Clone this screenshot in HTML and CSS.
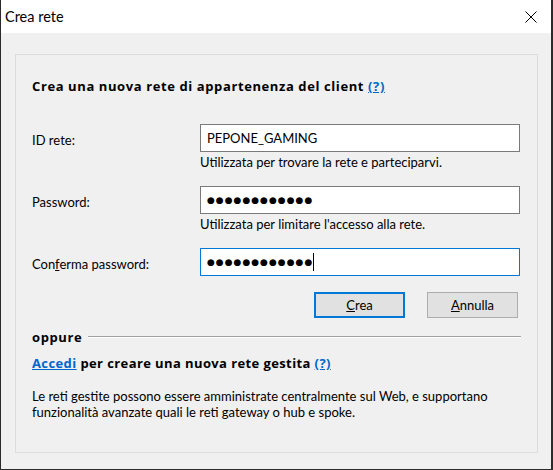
FILE: index.html
```html
<!DOCTYPE html>
<html lang="it">
<head>
<meta charset="utf-8">
<title>Crea rete</title>
<link rel="stylesheet" href="styles.css">
</head>
<body>
<div class="window">
  <div class="titlebar">
    <span class="title">Crea rete</span>
    <svg class="close" width="12" height="12" viewBox="0 0 12 12"><path d="M0.5 0.5 L11.5 11.5 M11.5 0.5 L0.5 11.5" stroke="#000" stroke-width="1" fill="none"/></svg>
  </div>
  <div class="client">
    <div class="group">
      <div class="heading">Crea una nuova rete di appartenenza del client <a class="link" href="#">(?)</a></div>
      <div class="form">
        <div class="label">ID rete:</div>
        <div class="field">
          <div class="input">PEPONE_GAMING</div>
          <div class="hint">Utilizzata per trovare la rete e parteciparvi.</div>
        </div>
        <div class="label">Password:</div>
        <div class="field">
          <div class="input"><span class="dots">●●●●●●●●●●●●</span></div>
          <div class="hint">Utilizzata per limitare l'accesso alla rete.</div>
        </div>
        <div class="label">Con<u>f</u>erma password:</div>
        <div class="field">
          <div class="input focused"><span class="dots">●●●●●●●●●●●●</span><span class="caret"></span></div>
        </div>
      </div>
      <div class="buttons">
        <button class="btn default"><u>C</u>rea</button>
        <button class="btn"><u>A</u>nnulla</button>
      </div>
      <div class="separator"><span class="sep-label">oppure</span><span class="sep-line"></span></div>
      <div class="managed"><a class="link" href="#">Accedi</a> per creare una nuova rete gestita <a class="link" href="#">(?)</a></div>
      <p class="desc">Le reti gestite possono essere amministrate centralmente sul Web, e supportano funzionalità avanzate quali le reti gateway o hub e spoke.</p>
    </div>
  </div>
</div>
</body>
</html>
```

FILE: styles.css
```css
html, body {
  margin: 0;
  padding: 0;
}
body {
  width: 553px;
  height: 470px;
  overflow: hidden;
  background: #2b2b2b;
  font-family: "Lato", "Open Sans", sans-serif;
  font-size: 13px;
  line-height: 16px;
  color: #000;
}
.window {
  margin-left: 1px;
  width: 550px;
  height: 469px;
  background: #f0f0f0;
  display: flex;
  flex-direction: column;
}
.titlebar {
  height: 33px;
  box-sizing: border-box;
  background: #fff;
  display: flex;
  align-items: center;
  justify-content: space-between;
  padding: 0 14px 0 4px;
}
.title {
  font-size: 14.5px;
}
.close {
  display: block;
}
.client {
  flex: 1;
  display: flex;
  padding: 21px 13px 16px 14px;
}
.group {
  flex: 1;
  border: 1px solid #dcdcdc;
  padding: 23px 16px 0 16px;
}
.heading,
.sep-label,
.managed {
  font-family: "Open Sans", "Lato", sans-serif;
  font-weight: bold;
  font-size: 13px;
  letter-spacing: 0.6px;
}
.link {
  color: #0066cc;
  text-decoration: underline;
}
.form {
  margin-top: 30px;
  display: grid;
  grid-template-columns: 168px 320px;
  row-gap: 16px;
}
.label {
  padding-top: 8px;
}
.input {
  height: 28px;
  box-sizing: border-box;
  border: 1px solid #7a7a7a;
  background: #fff;
  padding-left: 6px;
  line-height: 26px;
  display: flex;
  align-items: center;
}
.input.focused {
  border-color: #0078d7;
}
.dots {
  font-family: "DejaVu Sans", sans-serif;
  font-size: 9px;
  letter-spacing: 1px;
}
.caret {
  display: inline-block;
  width: 1px;
  height: 18px;
  background: #000;
}
.hint {
  margin-top: 2px;
}
.buttons {
  display: flex;
  justify-content: flex-end;
  gap: 22px;
  margin-top: 16px;
  padding-right: 3px;
}
.btn {
  width: 91px;
  height: 26px;
  box-sizing: border-box;
  border: 1px solid #adadad;
  background: #e1e1e1;
  font-family: inherit;
  font-size: 13px;
  color: #000;
  padding: 0;
}
.btn.default {
  border: 2px solid #0078d7;
}
.separator {
  margin-top: 11px;
  display: flex;
  align-items: center;
}
.sep-line {
  flex: 1;
  margin-left: 6px;
  border-top: 1px solid #a0a0a0;
  border-bottom: 1px solid #fff;
}
.managed {
  margin-top: 10px;
  letter-spacing: 0.4px;
}
.desc {
  margin: 17px 0 0 0;
}
```
